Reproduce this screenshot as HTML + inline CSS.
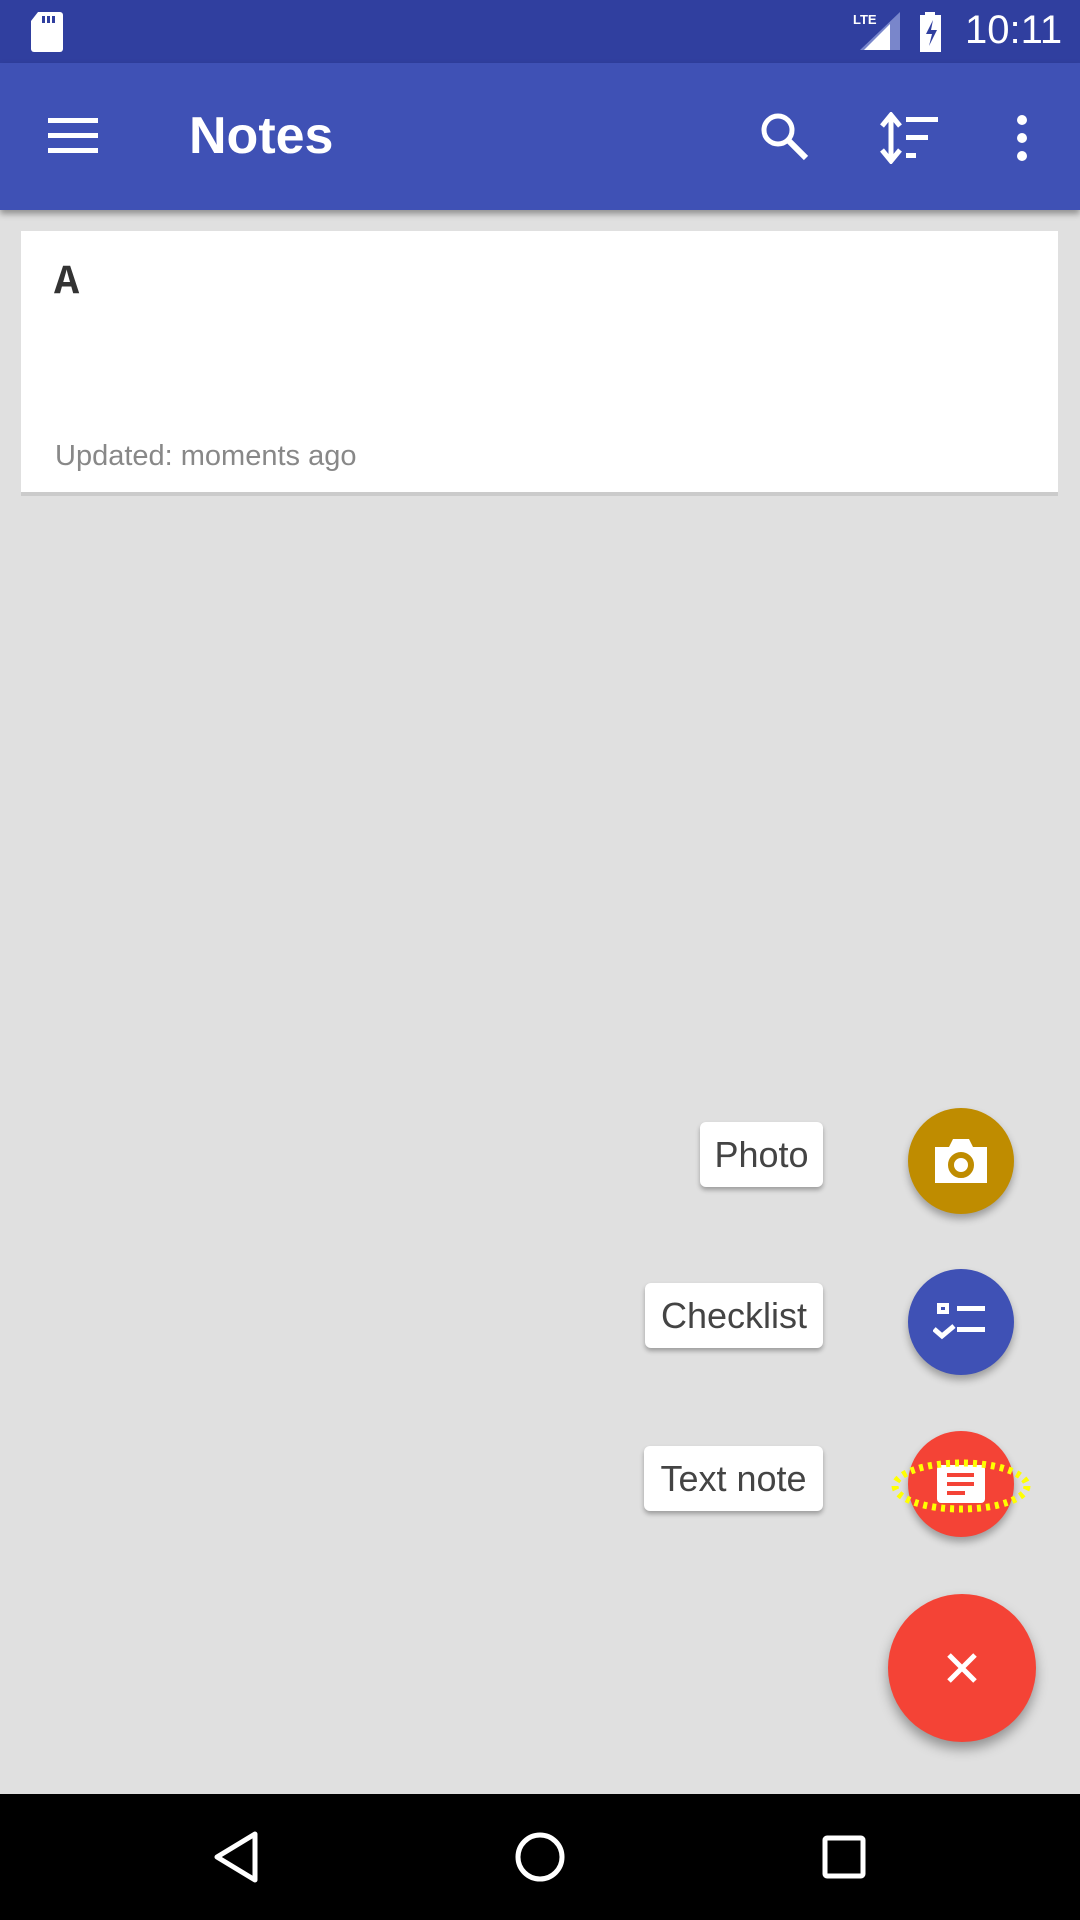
<!DOCTYPE html>
<html><head><meta charset="utf-8"><style>
*{margin:0;padding:0;box-sizing:border-box}
body{width:1080px;height:1920px;background:#e0e0e0;position:relative;overflow:hidden;font-family:"Liberation Sans",sans-serif}
.abs{position:absolute}
.lbl{position:absolute;background:#fff;border-radius:6px;box-shadow:0 3px 5px rgba(0,0,0,.3);font-size:36px;color:#444;display:flex;align-items:center;justify-content:center;height:65px;right:257px}
.fab{position:absolute;border-radius:50%;box-shadow:0 5px 8px rgba(0,0,0,.3);display:flex;align-items:center;justify-content:center}
</style></head><body>
<div class="abs" style="left:0;top:0;width:1080px;height:63px;background:#303f9f"></div>
<svg class="abs" style="left:30px;top:12px" width="34" height="40" viewBox="0 0 34 40"><path d="M8 0H30a3 3 0 0 1 3 3V37a3 3 0 0 1-3 3H4a3 3 0 0 1-3-3V9z" fill="#fff"/><rect x="12" y="4" width="3" height="7" fill="#303f9f"/><rect x="17" y="4" width="3" height="7" fill="#303f9f"/><rect x="22" y="4" width="3" height="7" fill="#303f9f"/></svg>
<div class="abs" style="left:853px;top:12px;color:#fff;font-size:13px;font-weight:bold">LTE</div>
<svg class="abs" style="left:860px;top:12px" width="42" height="38"><polygon points="40,0 40,38 0,38" fill="#7986cb"/><polygon points="30,12 30,38 4,38" fill="#fff"/></svg>
<svg class="abs" style="left:918px;top:12px" width="26" height="40"><rect x="7" y="0" width="10" height="4" fill="#fff"/><rect x="2" y="3" width="21" height="37" fill="#fff"/><path d="M15 8L8 22h6l-3 12 8-16h-6z" fill="#303f9f"/></svg>
<div class="abs" style="left:965px;top:8px;color:#fff;font-size:40px">10:11</div>
<div class="abs" style="left:0;top:63px;width:1080px;height:147px;background:#3f51b5;box-shadow:0 4px 6px rgba(0,0,0,.35)"></div>
<svg class="abs" style="left:48px;top:118px" width="50" height="36"><rect y="0" width="50" height="5" fill="#fff"/><rect y="15" width="50" height="5" fill="#fff"/><rect y="30" width="50" height="5" fill="#fff"/></svg>
<div class="abs" style="left:189px;top:106px;color:#fff;font-size:52px;font-weight:bold">Notes</div>
<svg class="abs" style="left:758px;top:110px" width="54" height="54"><circle cx="20" cy="20" r="14" fill="none" stroke="#fff" stroke-width="5"/><path d="M30 30L48 48" stroke="#fff" stroke-width="6"/></svg>
<svg class="abs" style="left:880px;top:112px" width="60" height="52"><path d="M11 4V48M2 14L11 3 20 14M2 38L11 49 20 38" stroke="#fff" stroke-width="5" fill="none"/><rect x="26" y="5" width="32" height="5" fill="#fff"/><rect x="26" y="23" width="22" height="5" fill="#fff"/><rect x="26" y="41" width="10" height="5" fill="#fff"/></svg>
<svg class="abs" style="left:1012px;top:114px" width="20" height="48"><circle cx="10" cy="6" r="5" fill="#fff"/><circle cx="10" cy="24" r="5" fill="#fff"/><circle cx="10" cy="42" r="5" fill="#fff"/></svg>
<div class="abs" style="left:21px;top:231px;width:1037px;height:265px;background:#fff;border-bottom:4px solid #cbcbcb"></div>
<div class="abs" style="left:54px;top:258px;font-family:'Liberation Mono',monospace;font-weight:bold;font-size:42px;color:#333">A</div>
<div class="abs" style="left:55px;top:440px;font-size:29px;color:#888">Updated: moments ago</div>
<div class="lbl" style="top:1122px;width:123px">Photo</div>
<div class="lbl" style="top:1283px;width:178px">Checklist</div>
<div class="lbl" style="top:1446px;width:179px">Text note</div>
<div class="fab" style="left:908px;top:1108px;width:106px;height:106px;background:#bf8c00"><svg width="58" height="48"><path d="M3 10H17L21 2H37L41 10H55V46H3Z" fill="#fff"/><circle cx="29" cy="28" r="10" fill="none" stroke="#bf8c00" stroke-width="6"/></svg></div>
<div class="fab" style="left:908px;top:1269px;width:106px;height:106px;background:#3f51b5"><svg width="56" height="42"><rect x="4" y="2" width="12" height="11" fill="#fff"/><rect x="8" y="6" width="4" height="3" fill="#3f51b5"/><rect x="24" y="5" width="28" height="5" fill="#fff"/><rect x="24" y="26" width="28" height="5" fill="#fff"/><path d="M1 28L9 35 21 25" stroke="#fff" stroke-width="5" fill="none"/></svg></div>
<div class="fab" style="left:908px;top:1431px;width:106px;height:106px;background:#f44336"><svg width="50" height="40"><rect x="1" y="1" width="48" height="38" rx="4" fill="#fff"/><rect x="11" y="9" width="27" height="4" fill="#f44336"/><rect x="11" y="18" width="27" height="4" fill="#f44336"/><rect x="11" y="27" width="18" height="4" fill="#f44336"/></svg></div>
<svg class="abs" style="left:890px;top:1458px" width="142" height="56"><ellipse cx="71" cy="28" rx="66" ry="23" fill="none" stroke="#ffff00" stroke-width="7" stroke-dasharray="4 5"/></svg>
<div class="fab" style="left:888px;top:1594px;width:148px;height:148px;background:#f44336;box-shadow:0 7px 12px rgba(0,0,0,.35)"><svg width="32" height="32"><path d="M3 3L29 29M29 3L3 29" stroke="#fff" stroke-width="5"/></svg></div>
<div class="abs" style="left:0;top:1794px;width:1080px;height:126px;background:#000"></div>
<svg class="abs" style="left:212px;top:1831px" width="48" height="52"><polygon points="43,3 43,49 5,26" fill="none" stroke="#fff" stroke-width="5" stroke-linejoin="round"/></svg>
<svg class="abs" style="left:514px;top:1831px" width="52" height="52"><circle cx="26" cy="26" r="22" fill="none" stroke="#fff" stroke-width="5"/></svg>
<svg class="abs" style="left:822px;top:1835px" width="44" height="44"><rect x="3" y="3" width="38" height="38" rx="2" fill="none" stroke="#fff" stroke-width="5"/></svg>
</body></html>
